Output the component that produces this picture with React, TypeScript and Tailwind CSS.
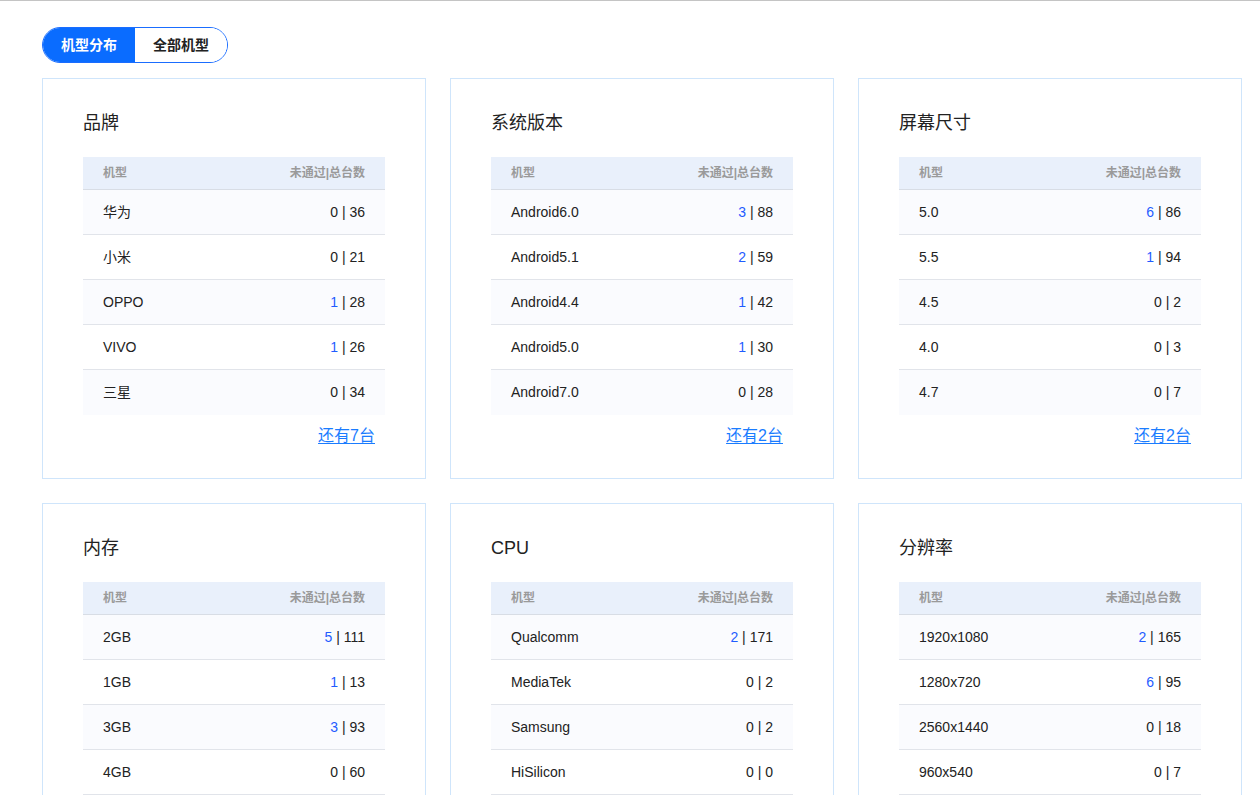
import { useState } from "react";

type Row = { name: string; fail: number; total: number };
type Card = { title: string; rows: Row[]; more: number };

const cards: Card[] = [
  {
    title: "品牌",
    more: 7,
    rows: [
      { name: "华为", fail: 0, total: 36 },
      { name: "小米", fail: 0, total: 21 },
      { name: "OPPO", fail: 1, total: 28 },
      { name: "VIVO", fail: 1, total: 26 },
      { name: "三星", fail: 0, total: 34 }
    ]
  },
  {
    title: "系统版本",
    more: 2,
    rows: [
      { name: "Android6.0", fail: 3, total: 88 },
      { name: "Android5.1", fail: 2, total: 59 },
      { name: "Android4.4", fail: 1, total: 42 },
      { name: "Android5.0", fail: 1, total: 30 },
      { name: "Android7.0", fail: 0, total: 28 }
    ]
  },
  {
    title: "屏幕尺寸",
    more: 2,
    rows: [
      { name: "5.0", fail: 6, total: 86 },
      { name: "5.5", fail: 1, total: 94 },
      { name: "4.5", fail: 0, total: 2 },
      { name: "4.0", fail: 0, total: 3 },
      { name: "4.7", fail: 0, total: 7 }
    ]
  },
  {
    title: "内存",
    more: 2,
    rows: [
      { name: "2GB", fail: 5, total: 111 },
      { name: "1GB", fail: 1, total: 13 },
      { name: "3GB", fail: 3, total: 93 },
      { name: "4GB", fail: 0, total: 60 },
      { name: "6GB", fail: 0, total: 4 }
    ]
  },
  {
    title: "CPU",
    more: 1,
    rows: [
      { name: "Qualcomm", fail: 2, total: 171 },
      { name: "MediaTek", fail: 0, total: 2 },
      { name: "Samsung", fail: 0, total: 2 },
      { name: "HiSilicon", fail: 0, total: 0 },
      { name: "Spreadtrum", fail: 0, total: 1 }
    ]
  },
  {
    title: "分辨率",
    more: 3,
    rows: [
      { name: "1920x1080", fail: 2, total: 165 },
      { name: "1280x720", fail: 6, total: 95 },
      { name: "2560x1440", fail: 0, total: 18 },
      { name: "960x540", fail: 0, total: 7 },
      { name: "854x480", fail: 0, total: 5 }
    ]
  }
];

const tabs = ["机型分布", "全部机型"];

function StatCard({ card }: { card: Card }) {
  return (
    <div className="flex h-[401px] flex-col border border-[#cfe5fb] bg-white px-10 pt-8">
      <h3 className="text-[18px] leading-6 text-[#222]">{card.title}</h3>
      <div className="mt-[22px]">
        <div className="flex h-[33px] items-center justify-between border-b border-[#d8dde5] bg-[#e9f0fb] px-5 text-[12px] font-bold text-[#9a9a9a]">
          <span>机型</span>
          <span>未通过|总台数</span>
        </div>
        {card.rows.map((row, i) => (
          <div
            key={row.name}
            className={`flex h-[45px] items-center justify-between px-5 text-[14px] text-[#222] ${
              i % 2 === 0 ? "bg-[#fafbfe]" : "bg-white"
            } ${i < card.rows.length - 1 ? "border-b border-[#e1e4ea]" : ""}`}
          >
            <span>{row.name}</span>
            <span>
              <span className={row.fail > 0 ? "text-[#1f5cff]" : ""}>{row.fail}</span> | {row.total}
            </span>
          </div>
        ))}
      </div>
      <div className="mt-[11px] flex justify-end pr-[10px]">
        <a href="#" className="text-[16px] leading-5 text-[#1a7cff] underline underline-offset-2">
          还有{card.more}台
        </a>
      </div>
    </div>
  );
}

export default function App() {
  const [active, setActive] = useState(0);

  return (
    <div
      className="min-h-[795px] border-t border-[#c4c4c4] bg-white"
      style={{ fontFamily: '"Liberation Sans", Arial, "Noto Sans CJK SC", sans-serif' }}
    >
      <div className="ml-[42px] w-[1200px] pt-[26px]">
        <div className="flex h-9 w-[186px] overflow-hidden rounded-full border border-[#1a6dff]">
          {tabs.map((tab, i) => (
            <button
              key={tab}
              type="button"
              onClick={() => setActive(i)}
              className={`flex items-center justify-center text-[14px] font-bold ${
                i === 0 ? "w-[92px]" : "flex-1"
              } ${active === i ? "bg-[#0a6cff] text-white" : "bg-white text-[#222]"}`}
            >
              {tab}
            </button>
          ))}
        </div>

        <div className="mt-[15px] grid grid-cols-3 gap-6">
          {cards.map((card) => (
            <StatCard key={card.title} card={card} />
          ))}
        </div>
      </div>
    </div>
  );
}
